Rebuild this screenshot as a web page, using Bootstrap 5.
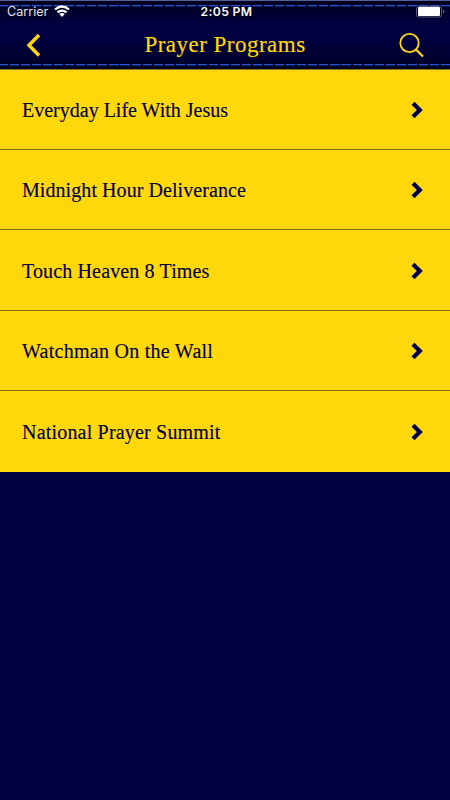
<!DOCTYPE html>
<html lang="en">
<head>
<meta charset="utf-8">
<meta name="viewport" content="width=device-width, initial-scale=1">
<title>Prayer Programs</title>
<link href="https://cdn.jsdelivr.net/npm/bootstrap@5.3.0/dist/css/bootstrap.min.css" rel="stylesheet">
<style>
body{background:#000041;font-family:"Liberation Serif",serif;min-height:800px;overflow:hidden}
.top-bar{height:69.7px;border-top:1px solid #5c5c96;border-bottom:1px solid #8a7420;
 --stitch:repeating-linear-gradient(90deg,#2652cc 0 8px,#060a30 8px 10px,#2652cc 10px 11.05px);
 --stitch-soft:repeating-linear-gradient(90deg,#0c1e60 0 8px,#03051f 8px 10px,#0c1e60 10px 11.05px);
 background:
 var(--stitch) 0 4px/450px 1px no-repeat,
 var(--stitch-soft) 0 5px/450px 1px no-repeat,
 var(--stitch) 0 63px/450px 1px no-repeat,
 var(--stitch-soft) 0 64px/450px 1px no-repeat,
 linear-gradient(#000020,#000028 8px,#000041 24px,#000041 36px,#00002a 62px,#00001c)}
.status{height:21px;font:12.6px/21px Inter,sans-serif;color:#e4e4ee;text-shadow:0 1px 1px #000}
.status .side{width:150px;padding-left:7px}
.status .wifi{margin-left:5px}
.clock{color:#fff;font-weight:600;font-size:12.2px;letter-spacing:.35px;padding-left:3px}
.title-row{height:46px;color:#fdd60b}
.title-row h1{font-size:23px;line-height:46px;letter-spacing:.48px;padding-left:8px;-webkit-text-stroke:.2px}
.programs{--bs-list-group-bg:#ffd80b;--bs-list-group-color:#000041;--bs-list-group-border-color:#80700c}
.programs .list-group-item{height:80.3px;font-size:20px;padding:1.6px 26px 0 22px;border-width:0 0 1px;-webkit-text-stroke:.15px}
.programs .list-group-item:nth-child(2){letter-spacing:.07px}
.programs .list-group-item:nth-child(3){letter-spacing:.14px}
.programs .list-group-item:nth-child(4){letter-spacing:.27px}
.programs .list-group-item:nth-child(5){letter-spacing:.19px;border-bottom-color:#dcba10;height:81px}
</style>
</head>
<body>
<header class="top-bar">
 <div class="status d-flex justify-content-between align-items-center">
  <div class="side d-flex align-items-center"><span>Carrier</span>
   <svg class="wifi" width="18" height="13" viewBox="0 0 18 13" fill="none" stroke="#fff" stroke-width="2.2"><path d="M2 4.5Q9-1.5 16 4.5M4.5 7.4Q9 3.8 13.5 7.4"/><path d="M6.3 9Q9 6.8 11.7 9L9 12Z" fill="#fff" stroke="none"/></svg>
  </div>
  <span class="clock">2:05 PM</span>
  <div class="side d-flex justify-content-end pe-1">
   <svg width="30" height="12" viewBox="0 0 30 12"><rect x=".5" y=".5" width="25" height="10.5" rx="2.5" fill="#000018" stroke="#5c5c7c"/><rect x="2" y="1" width="22" height="9" rx="1" fill="#fff"/><path d="M27 3.5Q30 5.5 27 7.5Z" fill="#66668c"/></svg>
  </div>
 </div>
 <div class="title-row d-flex align-items-center justify-content-between">
  <svg class="ms-4" width="20" height="24" viewBox="0 0 20 24" fill="none" stroke="#fdd60b" stroke-width="3.5"><path d="M15 2L5 12.2L15 22.4"/></svg>
  <h1 class="m-0 fw-normal"><span>Prayer Programs</span></h1>
  <svg class="me-4" width="28" height="28" viewBox="0 0 28 28" fill="none" stroke="#fdd60b" stroke-width="1.8"><circle cx="11.5" cy="12" r="9.2"/><path d="M18 18.5L25 25.5" stroke-width="2.2"/></svg>
 </div>
</header>
<main class="programs list-group list-group-flush">
 <a class="list-group-item d-flex align-items-center justify-content-between"><span>Everyday Life With Jesus</span><svg width="14" height="18" viewBox="0 0 14 18" fill="none" stroke="#000041" stroke-width="4.2"><path d="M3 2.3L9.8 9L3 15.7"/></svg></a>
 <a class="list-group-item d-flex align-items-center justify-content-between"><span>Midnight Hour Deliverance</span><svg width="14" height="18" viewBox="0 0 14 18" fill="none" stroke="#000041" stroke-width="4.2"><path d="M3 2.3L9.8 9L3 15.7"/></svg></a>
 <a class="list-group-item d-flex align-items-center justify-content-between"><span>Touch Heaven 8 Times</span><svg width="14" height="18" viewBox="0 0 14 18" fill="none" stroke="#000041" stroke-width="4.2"><path d="M3 2.3L9.8 9L3 15.7"/></svg></a>
 <a class="list-group-item d-flex align-items-center justify-content-between"><span>Watchman On the Wall</span><svg width="14" height="18" viewBox="0 0 14 18" fill="none" stroke="#000041" stroke-width="4.2"><path d="M3 2.3L9.8 9L3 15.7"/></svg></a>
 <a class="list-group-item d-flex align-items-center justify-content-between"><span>National Prayer Summit</span><svg width="14" height="18" viewBox="0 0 14 18" fill="none" stroke="#000041" stroke-width="4.2"><path d="M3 2.3L9.8 9L3 15.7"/></svg></a>
</main>
<script src="https://cdn.jsdelivr.net/npm/bootstrap@5.3.0/dist/js/bootstrap.bundle.min.js"></script>
</body>
</html>
